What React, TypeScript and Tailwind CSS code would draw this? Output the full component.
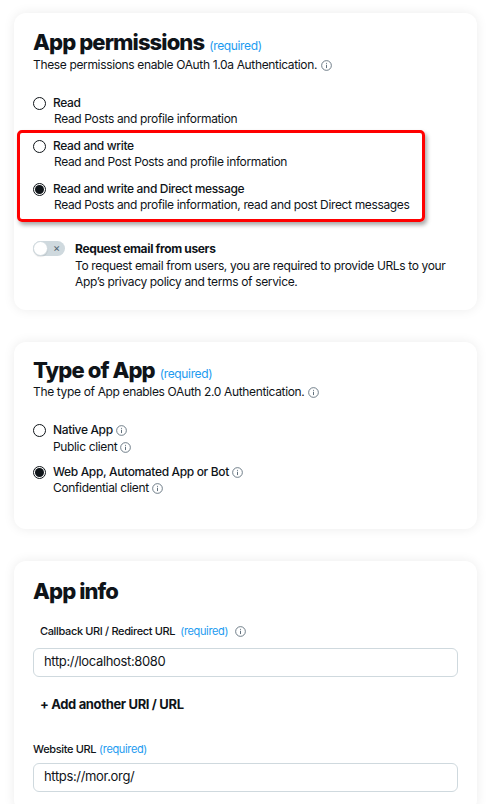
import React from "react";

const font = { fontFamily: "Inter, 'Liberation Sans', Arial, sans-serif" };

function InfoIcon({ className = "" }: { className?: string }) {
  return (
    <svg
      viewBox="0 0 12 12"
      className={`inline-block w-[11px] h-[11px] text-[#536471] shrink-0 ${className}`}
      fill="none"
      stroke="currentColor"
    >
      <circle cx="6" cy="6" r="5.3" strokeWidth="0.9" />
      <line x1="6" y1="5.2" x2="6" y2="8.8" strokeWidth="1" />
      <circle cx="6" cy="3.5" r="0.6" fill="currentColor" stroke="none" />
    </svg>
  );
}

function Radio({ checked }: { checked?: boolean }) {
  return (
    <span className="w-[13px] h-[13px] rounded-full border border-[#0f1419] flex items-center justify-center shrink-0">
      {checked && <span className="w-[9px] h-[9px] rounded-full bg-[#0f1419]" />}
    </span>
  );
}

function Option({
  label,
  sub,
  checked,
  subIndent = "pl-[21px]",
}: {
  label: React.ReactNode;
  sub: React.ReactNode;
  checked?: boolean;
  subIndent?: string;
}) {
  return (
    <div className="flex flex-col whitespace-nowrap">
      <div className="flex items-center gap-[7px] h-[16px]">
        <Radio checked={checked} />
        <span className="text-[12px] font-medium text-[#0f1419]">{label}</span>
      </div>
      <div className={`text-[12px] leading-[16px] text-[#0f1419] ${subIndent}`}>{sub}</div>
    </div>
  );
}

function Card({ children, className = "" }: { children: React.ReactNode; className?: string }) {
  return (
    <div
      className={`bg-white rounded-[12px] shadow-[0_0_12px_rgba(0,0,0,0.08)] px-[19px] ${className}`}
    >
      {children}
    </div>
  );
}

function Heading({ title, required }: { title: string; required?: boolean }) {
  return (
    <div className="flex items-baseline gap-[5px]">
      <h2 className="text-[22px] leading-[26px] font-extrabold text-[#0f1419] tracking-[-0.9px]">
        {title}
      </h2>
      {required && (
        <span className="text-[12px] font-normal text-[#1d9bf0]">(required)</span>
      )}
    </div>
  );
}

export default function App() {
  return (
    <div
      className="min-h-screen bg-white px-[14px] pt-[13px] pb-8 flex flex-col gap-[32px] tracking-[-0.35px]"
      style={font}
    >
      <Card className="pt-[16px] h-[297px]">
        <Heading title="App permissions" required />
        <p className="text-[12px] leading-[16px] text-[#0f1419] mt-[2px] flex items-center gap-[4px]">
          These permissions enable OAuth 1.0a Authentication. <InfoIcon />
        </p>
        <div className="mt-[22px]">
          <Option label="Read" sub="Read Posts and profile information" />
        </div>
        <div className="-mx-[16px] mt-[3px] px-[13px] pt-[5px] pb-[6px] border-[3px] border-[#ff0000] rounded-[5px] shadow-[2px_3px_4px_rgba(0,0,0,0.35)] flex flex-col gap-[11px] w-[408px]">
          <Option label="Read and write" sub="Read and Post Posts and profile information" />
          <Option
            label="Read and write and Direct message"
            sub="Read Posts and profile information, read and post Direct messages"
            checked
          />
        </div>
        <div className="flex gap-[10px] mt-[19px]">
          <div className="relative w-[32px] h-[15px] rounded-full bg-[#cfd9de] shrink-0">
            <span className="absolute left-0 top-0 w-[15px] h-[15px] rounded-full bg-white border border-[#cfd9de] shadow-[0_1px_1px_rgba(0,0,0,0.1)]" />
            <span className="absolute right-[5px] top-0 text-[11px] leading-[15px] text-[#536471]">×</span>
          </div>
          <div className="whitespace-nowrap">
            <div className="text-[12px] leading-[16px] font-bold text-[#0f1419]">Request email from users</div>
            <div className="text-[12px] leading-[16px] text-[#0f1419] mt-[1px]">
              To request email from users, you are required to provide URLs to your
              <br />
              App’s privacy policy and terms of service.
            </div>
          </div>
        </div>
      </Card>

      <Card className="pt-[15px] h-[187px]">
        <Heading title="Type of App" required />
        <p className="text-[12px] leading-[16px] text-[#0f1419] mt-[1px] flex items-center gap-[4px]">
          The type of App enables OAuth 2.0 Authentication. <InfoIcon />
        </p>
        <div className="mt-[22px] flex flex-col gap-[9px]">
          <Option
            label={
              <span className="inline-flex items-center gap-[3px]">
                Native App <InfoIcon />
              </span>
            }
            sub={
              <span className="inline-flex items-center gap-[3px] pt-[1px]">
                Public client <InfoIcon />
              </span>
            }
            subIndent="pl-[20px]"
          />
          <Option
            label={
              <span className="inline-flex items-center gap-[3px]">
                Web App, Automated App or Bot <InfoIcon />
              </span>
            }
            sub={
              <span className="inline-flex items-center gap-[3px]">
                Confidential client <InfoIcon />
              </span>
            }
            subIndent="pl-[20px]"
            checked
          />
        </div>
      </Card>

      <Card className="pt-[17px] pb-[20px]">
        <Heading title="App info" />
        <div className="mt-[19px] pl-[7px] flex items-center gap-[5px] text-[11px] font-medium text-[#0f1419]">
          <span>Callback URI / Redirect URL</span>
          <span className="font-normal text-[#1d9bf0]">(required)</span>
          <InfoIcon className="ml-[2px]" />
        </div>
        <div className="mt-[8px] h-[29px] rounded-[6px] border border-[#cfd9de] flex items-center px-[10px] text-[13px] text-[#0f1419]">
          http://localhost:8080
        </div>
        <div className="mt-[18px] pl-[7px] text-[13px] font-bold text-[#0f1419]">+ Add another URI / URL</div>
        <div className="mt-[27px] flex items-center gap-[3px] text-[11px] font-medium text-[#0f1419]">
          <span>Website URL</span>
          <span className="font-normal text-[#1d9bf0]">(required)</span>
        </div>
        <div className="mt-[5px] h-[29px] rounded-[6px] border border-[#cfd9de] flex items-center px-[10px] text-[13px] text-[#0f1419]">
          https://mor.org/
        </div>
      </Card>
    </div>
  );
}
